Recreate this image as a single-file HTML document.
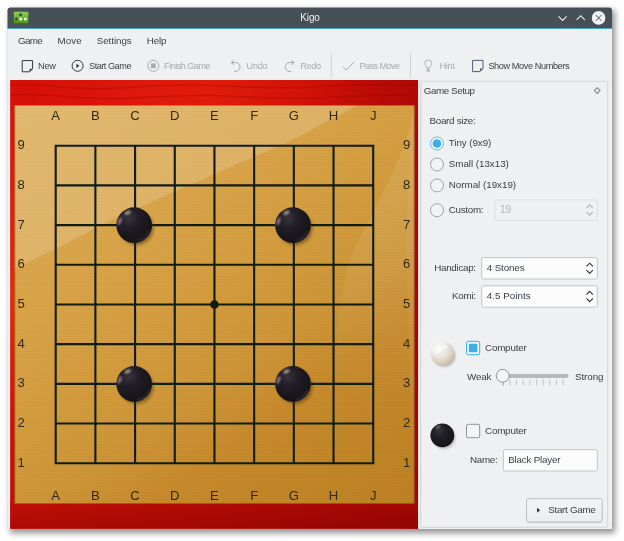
<!DOCTYPE html>
<html lang="en"><head><meta charset="utf-8"><title>Kigo</title>
<style>
html,body{margin:0;padding:0;}
body{width:624px;height:541px;background:#fff;position:relative;overflow:hidden;font-family:"Liberation Sans",sans-serif;}
#win{position:absolute;left:7.5px;top:7.4px;width:604.5px;height:521.3px;background:#eff0f1;border-radius:3px 3px 0 0;box-shadow:2.5px 3.5px 6px rgba(0,0,0,.44);}
#gfx{position:absolute;left:0;top:0;}
text{font-family:"Liberation Sans",sans-serif;}
#txt{will-change:transform;}

</style></head>
<body>
<div id="win"></div>
<svg id="gfx" width="624" height="541" viewBox="0 0 624 541">
<defs>
<linearGradient id="redtop" x1="0" y1="0" x2="1" y2="0">
<stop offset="0" stop-color="#d40e08"/><stop offset="0.14" stop-color="#d9120a"/><stop offset="0.32" stop-color="#de180a"/><stop offset="0.5" stop-color="#e01c0a"/><stop offset="0.72" stop-color="#d21208"/><stop offset="0.88" stop-color="#bc0b06"/><stop offset="1" stop-color="#b00905"/>
</linearGradient>
<linearGradient id="redleft" x1="0" y1="0" x2="0" y2="1">
<stop offset="0" stop-color="#d81008"/><stop offset="0.16" stop-color="#e0120a"/><stop offset="0.49" stop-color="#e62a04"/><stop offset="0.76" stop-color="#d80a08"/><stop offset="0.94" stop-color="#c20d06"/><stop offset="1" stop-color="#b80c05"/>
</linearGradient>
<linearGradient id="redright" x1="0" y1="0" x2="0" y2="1">
<stop offset="0" stop-color="#b00905"/><stop offset="0.5" stop-color="#a80404"/><stop offset="1" stop-color="#9c0602"/>
</linearGradient>
<linearGradient id="redbot" x1="0" y1="0" x2="1" y2="0">
<stop offset="0" stop-color="#c20e06"/><stop offset="0.5" stop-color="#b30a05"/><stop offset="1" stop-color="#a20703"/>
</linearGradient>
<linearGradient id="woodg" gradientUnits="userSpaceOnUse" x1="14.5" y1="105" x2="330.5" y2="560">
<stop offset="0" stop-color="#dcaa52"/><stop offset="0.33" stop-color="#d8a247"/><stop offset="0.5" stop-color="#d19a3b"/><stop offset="0.62" stop-color="#cc9436"/><stop offset="0.73" stop-color="#c6892a"/><stop offset="0.85" stop-color="#c08525"/><stop offset="1" stop-color="#bb8020"/>
</linearGradient>
<linearGradient id="swg" gradientUnits="userSpaceOnUse" x1="0" y1="105" x2="0" y2="400">
<stop offset="0" stop-color="#fff" stop-opacity="0.11"/><stop offset="0.45" stop-color="#fff" stop-opacity="0.075"/><stop offset="1" stop-color="#fff" stop-opacity="0"/>
</linearGradient>
<linearGradient id="swg2" gradientUnits="userSpaceOnUse" x1="0" y1="105" x2="0" y2="475">
<stop offset="0" stop-color="#fff" stop-opacity="0.05"/><stop offset="1" stop-color="#fff" stop-opacity="0.035"/>
</linearGradient>
<linearGradient id="icg" x1="0" y1="0" x2="0" y2="1"><stop offset="0" stop-color="#93cc5e"/><stop offset="0.5" stop-color="#6cb330"/><stop offset="1" stop-color="#4c9613"/></linearGradient>
<linearGradient id="btng" x1="0" y1="0" x2="0" y2="1"><stop offset="0" stop-color="#f3f4f4"/><stop offset="1" stop-color="#ecedee"/></linearGradient>
<linearGradient id="botv" x1="0" y1="0" x2="0" y2="1"><stop offset="0" stop-color="#500" stop-opacity="0"/><stop offset="1" stop-color="#500" stop-opacity="0.22"/></linearGradient>
<radialGradient id="bst" cx="0.36" cy="0.3" r="0.75">
<stop offset="0" stop-color="#38343d"/><stop offset="0.35" stop-color="#211e25"/><stop offset="1" stop-color="#131116"/>
</radialGradient>
<radialGradient id="wst" cx="0.38" cy="0.32" r="0.75">
<stop offset="0" stop-color="#ffffff"/><stop offset="0.4" stop-color="#f1efeb"/><stop offset="0.75" stop-color="#dfd3c0"/><stop offset="1" stop-color="#cbb595"/>
</radialGradient>
<pattern id="grain" width="8" height="3" patternUnits="userSpaceOnUse"><rect width="8" height="1" y="0" fill="#000" fill-opacity="0.012"/><rect width="8" height="1" y="1.5" fill="#fff" fill-opacity="0.015"/></pattern>
<filter id="blur1" x="-30%" y="-30%" width="160%" height="160%"><feGaussianBlur stdDeviation="1.6"/></filter>
<filter id="blur13" x="-30%" y="-30%" width="160%" height="160%"><feGaussianBlur stdDeviation="1.3"/></filter>
<filter id="blur05" x="-30%" y="-30%" width="160%" height="160%"><feGaussianBlur stdDeviation="0.9"/></filter>
</defs>
<path d="M7.500 28.3V10.400a3 3 0 0 1 3-3h598.500a3 3 0 0 1 3 3v17.900z" fill="#475057"/>
<rect x="7.500" y="28" width="604.500" height="0.900" fill="#3da4da"/>
<rect x="13.800" y="11.800" width="14.600" height="11.400" rx="1" fill="url(#icg)"/>
<circle cx="20.6" cy="14.7" r="1.5" fill="#3c4a3a"/><circle cx="16.4" cy="18.9" r="1.5" fill="#3c4a3a"/><circle cx="20.7" cy="18.9" r="1.5" fill="#f4f8f0"/><circle cx="25.4" cy="18.9" r="1.5" fill="#f4f8f0"/>
<path d="M558.500 16.300l4.100 4.100 4.100-4.100" fill="none" stroke="#eff0f1" stroke-width="1.100"/>
<path d="M576.600 19.800l4.100-4.100 4.100 4.100" fill="none" stroke="#eff0f1" stroke-width="1.100"/>
<circle cx="598.600" cy="17.900" r="6.800" fill="#f2f3f4"/>
<path d="M595.700 15l5.800 5.800M601.500 15l-5.800 5.800" fill="none" stroke="#475057" stroke-width="1"/>
<rect x="330.8" y="53" width="1" height="24.5" fill="#cfd1d3"/>
<rect x="410" y="53" width="1" height="24.5" fill="#cfd1d3"/>
<path d="M22.2 60.6h10.4v8.2l-3 3h-7.4z" fill="none" stroke="#31363b" stroke-width="1"/><path d="M32.6 68.8h-3v3z" fill="#31363b"/>
<circle cx="77.6" cy="65.8" r="5.5" fill="none" stroke="#31363b" stroke-width="1"/><path d="M76.400 63.700v4.200l3.100-2.100z" fill="#31363b"/>
<circle cx="153.3" cy="65.8" r="5.5" fill="none" stroke="#a8aaac" stroke-width="1"/><rect x="150.9" y="63.4" width="4.8" height="4.8" fill="#a8aaac"/>
<path d="M233.800 60.200L231.200 62.500l2.600 2.300M231.400 62.500H235.500A4.500 4.500 0 0 1 235.500 71.500h-1.500" fill="none" stroke="#a8aaac" stroke-width="1"/>
<path d="M291.500 60.200L294.100 62.500l-2.600 2.300M293.900 62.500H289.800A4.500 4.500 0 0 0 289.800 71.500h1.500" fill="none" stroke="#a8aaac" stroke-width="1"/>
<path d="M342.8 66.8l3.4 3.4 8.2-8.6" fill="none" stroke="#a8aaac" stroke-width="1"/>
<path d="M426.800 68.200C426.800 66 424.800 65.200 424.800 63.300A3.500 3.300 0 0 1 431.800 63.300C431.800 65.200 429.700 66 429.700 68.200z" fill="none" stroke="#a8aaac" stroke-width="0.9"/><rect x="426.500" y="69.500" width="3.500" height="1.900" rx="0.600" fill="#a8aaac"/>
<path d="M472.6 60.4h10.4v8.2l-3 3h-7.4z" fill="none" stroke="#4f5c74" stroke-width="1"/><path d="M483.0 68.6h-3v3z" fill="#4f5c74"/>
<rect x="10.4" y="80" width="407.6" height="448.7" fill="url(#redtop)"/>
<rect x="10.4" y="80" width="6" height="448.7" fill="url(#redleft)"/>
<rect x="412" y="80" width="6" height="448.7" fill="url(#redright)"/>
<rect x="10.4" y="500" width="407.6" height="28.700" fill="url(#redbot)"/>
<rect x="10.4" y="503" width="407.6" height="25.700" fill="url(#botv)"/>
<g fill="none" stroke="#9a0503" stroke-opacity="0.33" stroke-width="1.5"><path d="M10.4 85.5c30-3 50 3.5 85 3.2s70-5 110-3.4 70 4 110 1.6 70-3.500 103-1.500"/><path d="M10.400 95.500c30-3.500 55 2.500 90 3s70-4 110-3 75 4.500 115 2 60-3 93-2"/></g>
<rect x="14.5" y="105" width="400" height="398.8" fill="url(#woodg)"/>
<rect x="14.5" y="105" width="400" height="398.8" fill="url(#grain)"/>
<path d="M14.5 105H358L328 121 290 141 214.700 174 150 202.500 114 218.800 54.700 249.300 14.500 268.500z" fill="#fff" fill-opacity="0.17"/>
<path d="M414.500 105C412 118 410 128 407 137 403 150 398 162 392 174 386 186 380 199 374 211 368 223 361 236 355 248 350 258 347 269 345 280 342 295 339 308 338 320 336 345 336 380 336 400H414.500z" fill="url(#swg)"/>
<path d="M414.500 105C411 150 406 200 406.500 250 407 330 411 420 414.500 475z" fill="url(#swg2)"/>
<rect x="14.9" y="105.400" width="399.200" height="398" fill="none" stroke="#6b3a08" stroke-opacity="0.55" stroke-width="0.8"/>
<path d="M55.70 144.70V464.22M54.70 145.70H374.22M95.39 144.70V464.22M54.70 185.39H374.22M135.08 144.70V464.22M54.70 225.08H374.22M174.77 144.70V464.22M54.70 264.77H374.22M214.46 144.70V464.22M54.70 304.46H374.22M254.15 144.70V464.22M54.70 344.15H374.22M293.84 144.70V464.22M54.70 383.84H374.22M333.53 144.70V464.22M54.70 423.53H374.22M373.22 144.70V464.22M54.70 463.22H374.22" fill="none" stroke="#0f1c14" stroke-width="2.1"/>
<circle cx="214.46" cy="304.46" r="4.3" fill="#0f1c14"/>
<ellipse cx="136.68" cy="228.18" rx="17" ry="17" fill="#3a2000" fill-opacity="0.45" filter="url(#blur1)"/>
<circle cx="134.18" cy="225.18" r="17.850" fill="url(#bst)"/>
<ellipse cx="127.68" cy="212.68" rx="3.200" ry="1.600" fill="#cfd6c0" fill-opacity="0.75" filter="url(#blur05)" transform="rotate(-25 127.68 212.68)"/>
<path d="M149.38 230.68A16.200 16.200 0 0 1 137.18 241.08" fill="none" stroke="#6a6670" stroke-opacity="0.5" stroke-width="1.200" filter="url(#blur05)"/>
<ellipse cx="119.68" cy="221.18" rx="1.500" ry="4" fill="#c9a5c4" fill-opacity="0.7" filter="url(#blur05)" transform="rotate(20 119.68 221.18)"/>
<ellipse cx="295.44" cy="228.18" rx="17" ry="17" fill="#3a2000" fill-opacity="0.45" filter="url(#blur1)"/>
<circle cx="292.94" cy="225.18" r="17.850" fill="url(#bst)"/>
<ellipse cx="286.44" cy="212.68" rx="3.200" ry="1.600" fill="#cfd6c0" fill-opacity="0.75" filter="url(#blur05)" transform="rotate(-25 286.44 212.68)"/>
<path d="M308.14 230.68A16.200 16.200 0 0 1 295.94 241.08" fill="none" stroke="#6a6670" stroke-opacity="0.5" stroke-width="1.200" filter="url(#blur05)"/>
<ellipse cx="278.44" cy="221.18" rx="1.500" ry="4" fill="#c9a5c4" fill-opacity="0.7" filter="url(#blur05)" transform="rotate(20 278.44 221.18)"/>
<ellipse cx="136.68" cy="386.94" rx="17" ry="17" fill="#3a2000" fill-opacity="0.45" filter="url(#blur1)"/>
<circle cx="134.18" cy="383.94" r="17.850" fill="url(#bst)"/>
<ellipse cx="127.68" cy="371.44" rx="3.200" ry="1.600" fill="#cfd6c0" fill-opacity="0.75" filter="url(#blur05)" transform="rotate(-25 127.68 371.44)"/>
<path d="M149.38 389.44A16.200 16.200 0 0 1 137.18 399.84" fill="none" stroke="#6a6670" stroke-opacity="0.5" stroke-width="1.200" filter="url(#blur05)"/>
<ellipse cx="119.68" cy="379.94" rx="1.500" ry="4" fill="#c9a5c4" fill-opacity="0.7" filter="url(#blur05)" transform="rotate(20 119.68 379.94)"/>
<ellipse cx="295.44" cy="386.94" rx="17" ry="17" fill="#3a2000" fill-opacity="0.45" filter="url(#blur1)"/>
<circle cx="292.94" cy="383.94" r="17.850" fill="url(#bst)"/>
<ellipse cx="286.44" cy="371.44" rx="3.200" ry="1.600" fill="#cfd6c0" fill-opacity="0.75" filter="url(#blur05)" transform="rotate(-25 286.44 371.44)"/>
<path d="M308.14 389.44A16.200 16.200 0 0 1 295.94 399.84" fill="none" stroke="#6a6670" stroke-opacity="0.5" stroke-width="1.200" filter="url(#blur05)"/>
<ellipse cx="278.44" cy="379.94" rx="1.500" ry="4" fill="#c9a5c4" fill-opacity="0.7" filter="url(#blur05)" transform="rotate(20 278.44 379.94)"/>
<rect x="418" y="80" width="2.6" height="448.7" fill="#e3e5e7"/>
<rect x="420.9" y="81.3" width="186.800" height="446" rx="1.500" fill="#eff0f1" stroke="#d2d4d6" stroke-width="1"/>
<path d="M597.200 87.700l2.900 2.900-2.900 2.900-2.900-2.900z" fill="none" stroke="#85888b" stroke-width="1.1"/>
<circle cx="437" cy="143.5" r="6.500" fill="#f4f9fc" stroke="#4fb5ea" stroke-width="0.900"/><circle cx="437" cy="143.5" r="4.350" fill="#3daee9"/>
<circle cx="437" cy="164.5" r="6.500" fill="#f1f2f3" stroke="#979a9d" stroke-width="0.900"/>
<circle cx="437" cy="185.4" r="6.500" fill="#f1f2f3" stroke="#979a9d" stroke-width="0.900"/>
<circle cx="437" cy="210.2" r="6.500" fill="#f1f2f3" stroke="#979a9d" stroke-width="0.900"/>
<rect x="494.800" y="199.900" width="102.500" height="20.500" rx="1.500" fill="#eff0f1" stroke="#dcdee0" stroke-width="1"/>
<path d="M586.50 208.10l3.200-3.200 3.200 3.200M586.50 211.90l3.200 3.200 3.200-3.200" fill="none" stroke="#b4b6b8" stroke-width="1.150"/>
<rect x="481.700" y="257.600" width="115.600" height="21.400" rx="1.500" fill="#fcfcfc" stroke="#c2c4c6" stroke-width="1"/>
<path d="M586.50 266.40l3.200-3.200 3.200 3.200M586.50 270.20l3.200 3.200 3.200-3.200" fill="none" stroke="#31363b" stroke-width="1.150"/>
<rect x="481.700" y="285.800" width="115.600" height="21.400" rx="1.500" fill="#fcfcfc" stroke="#c2c4c6" stroke-width="1"/>
<path d="M586.50 294.60l3.200-3.200 3.200 3.200M586.50 298.40l3.200 3.200 3.200-3.200" fill="none" stroke="#31363b" stroke-width="1.150"/>
<ellipse cx="444" cy="355.500" rx="11.300" ry="11.300" fill="#000" fill-opacity="0.24" filter="url(#blur13)"/>
<circle cx="442.300" cy="353.300" r="11.900" fill="url(#wst)"/>
<clipPath id="wclip"><circle cx="442.300" cy="353.300" r="11.900"/></clipPath>
<g clip-path="url(#wclip)" fill="none" stroke="#9a9aa6" stroke-opacity="0.22" stroke-width="1.300" filter="url(#blur05)"><path d="M431 358c6-2 14-7 20-13M432 362c7-3 15-8 21-14M436 366c6-3 12-7 17-12"/></g>
<ellipse cx="445.600" cy="347" rx="1.300" ry="0.900" fill="#fff" fill-opacity="0.9"/>
<rect x="466.500" y="341.300" width="13.200" height="13.400" rx="1.800" fill="#f2f8fc" stroke="#3daee9" stroke-width="1"/><rect x="468.900" y="343.700" width="8.400" height="8.600" rx="0.500" fill="#3daee9"/>
<rect x="503" y="373.900" width="65.400" height="4" rx="2" fill="#b6b9bb"/>
<rect x="502.80" y="379.400" width="0.850" height="6.200" fill="#3daee9"/>
<rect x="509.45" y="379.400" width="0.850" height="6.200" fill="#bcbec0"/>
<rect x="516.11" y="379.400" width="0.850" height="6.200" fill="#bcbec0"/>
<rect x="522.76" y="379.400" width="0.850" height="6.200" fill="#bcbec0"/>
<rect x="529.42" y="379.400" width="0.850" height="6.200" fill="#bcbec0"/>
<rect x="536.08" y="379.400" width="0.850" height="6.200" fill="#bcbec0"/>
<rect x="542.73" y="379.400" width="0.850" height="6.200" fill="#bcbec0"/>
<rect x="549.38" y="379.400" width="0.850" height="6.200" fill="#bcbec0"/>
<rect x="556.04" y="379.400" width="0.850" height="6.200" fill="#bcbec0"/>
<rect x="562.70" y="379.400" width="0.850" height="6.200" fill="#bcbec0"/>
<circle cx="502.700" cy="375.800" r="6.400" fill="#f4f5f5" stroke="#8e9194" stroke-width="1"/>
<ellipse cx="444" cy="437.500" rx="11.300" ry="11.300" fill="#000" fill-opacity="0.24" filter="url(#blur13)"/>
<circle cx="442.300" cy="435.300" r="11.900" fill="url(#bst)"/>
<ellipse cx="438" cy="427" rx="2.200" ry="1.100" fill="#cfd6c0" fill-opacity="0.7" filter="url(#blur05)" transform="rotate(-25 438 427)"/>
<rect x="466.500" y="424.300" width="13.200" height="13.400" rx="1.800" fill="#f3f4f4" stroke="#8e9194" stroke-width="1"/>
<rect x="503.400" y="449.600" width="93.900" height="21.400" rx="1.500" fill="#fcfcfc" stroke="#c2c4c6" stroke-width="1"/>
<rect x="526.900" y="499.600" width="75.200" height="23.300" rx="2.200" fill="#d3d5d7"/>
<rect x="526.500" y="498.700" width="75.700" height="23.300" rx="2" fill="url(#btng)" stroke="#babcbe" stroke-width="1"/>
<path d="M537 507.700v5l3.200-2.500z" fill="#31363b"/>

<g id="txt" font-family="Liberation Sans, sans-serif" style="white-space:pre">
<text x="300.30" y="20.80" font-size="10" fill="#eff0f1" textLength="19.60" lengthAdjust="spacing">Kigo</text>
<text x="18.00" y="43.50" font-size="9.8" fill="#393e43" textLength="24.70" lengthAdjust="spacing">Game</text>
<text x="57.50" y="43.50" font-size="9.8" fill="#393e43" textLength="24.20" lengthAdjust="spacing">Move</text>
<text x="96.75" y="43.50" font-size="9.8" fill="#393e43" textLength="34.95" lengthAdjust="spacing">Settings</text>
<text x="146.75" y="43.50" font-size="9.8" fill="#393e43" textLength="19.70" lengthAdjust="spacing">Help</text>
<text x="38.00" y="69.00" font-size="9.2" fill="#393e43" textLength="17.90" lengthAdjust="spacing">New</text>
<text x="89.00" y="69.00" font-size="9.2" fill="#393e43" textLength="42.50" lengthAdjust="spacing">Start Game</text>
<text x="164.10" y="69.00" font-size="9.2" fill="#a8aaac" textLength="46.50" lengthAdjust="spacing">Finish Game</text>
<text x="246.60" y="69.00" font-size="9.2" fill="#a8aaac" textLength="21.00" lengthAdjust="spacing">Undo</text>
<text x="300.35" y="69.00" font-size="9.2" fill="#a8aaac" textLength="20.75" lengthAdjust="spacing">Redo</text>
<text x="359.60" y="69.00" font-size="9.2" fill="#a8aaac" textLength="40.50" lengthAdjust="spacing">Pass Move</text>
<text x="439.50" y="69.00" font-size="9.2" fill="#a8aaac" textLength="15.50" lengthAdjust="spacing">Hint</text>
<text x="488.40" y="69.00" font-size="9.2" fill="#393e43" textLength="81.10" lengthAdjust="spacing">Show Move Numbers</text>
<text x="423.80" y="93.70" font-size="9.8" fill="#393e43" textLength="51.20" lengthAdjust="spacing">Game Setup</text>
<text x="429.50" y="123.90" font-size="9.8" fill="#393e43" textLength="46.20" lengthAdjust="spacing">Board size:</text>
<text x="448.80" y="146.10" font-size="9.8" fill="#393e43" textLength="42.50" lengthAdjust="spacing">Tiny (9x9)</text>
<text x="448.80" y="167.10" font-size="9.8" fill="#393e43" textLength="60.00" lengthAdjust="spacing">Small (13x13)</text>
<text x="448.80" y="188.00" font-size="9.8" fill="#393e43" textLength="67.30" lengthAdjust="spacing">Normal (19x19)</text>
<text x="448.80" y="212.80" font-size="9.8" fill="#393e43" textLength="34.80" lengthAdjust="spacing">Custom:</text>
<text x="499.90" y="212.80" font-size="10" fill="#b4b6b8" textLength="11.10" lengthAdjust="spacing">19</text>
<text x="434.20" y="271.10" font-size="9.8" fill="#393e43" textLength="41.90" lengthAdjust="spacing">Handicap:</text>
<text x="486.70" y="271.10" font-size="9.8" fill="#393e43" textLength="37.90" lengthAdjust="spacing">4 Stones</text>
<text x="451.90" y="299.30" font-size="9.8" fill="#393e43" textLength="24.20" lengthAdjust="spacing">Komi:</text>
<text x="486.70" y="299.30" font-size="9.8" fill="#393e43" textLength="43.90" lengthAdjust="spacing">4.5 Points</text>
<text x="485.00" y="350.90" font-size="9.8" fill="#393e43" textLength="41.70" lengthAdjust="spacing">Computer</text>
<text x="467.00" y="379.50" font-size="9.8" fill="#393e43" textLength="24.30" lengthAdjust="spacing">Weak</text>
<text x="574.90" y="379.50" font-size="9.8" fill="#393e43" textLength="28.60" lengthAdjust="spacing">Strong</text>
<text x="485.00" y="433.90" font-size="9.8" fill="#393e43" textLength="41.70" lengthAdjust="spacing">Computer</text>
<text x="470.00" y="463.10" font-size="9.8" fill="#393e43" textLength="27.70" lengthAdjust="spacing">Name:</text>
<text x="508.30" y="463.10" font-size="9.8" fill="#393e43" textLength="52.10" lengthAdjust="spacing">Black Player</text>
<text x="548.30" y="513.20" font-size="9.8" fill="#393e43" textLength="47.40" lengthAdjust="spacing">Start Game</text>
<text x="55.70" y="120.00" font-size="13.1" fill="#2e2a12" text-anchor="middle">A</text>
<text x="55.70" y="500.00" font-size="13.1" fill="#2e2a12" text-anchor="middle">A</text>
<text x="95.39" y="120.00" font-size="13.1" fill="#2e2a12" text-anchor="middle">B</text>
<text x="95.39" y="500.00" font-size="13.1" fill="#2e2a12" text-anchor="middle">B</text>
<text x="135.08" y="120.00" font-size="13.1" fill="#2e2a12" text-anchor="middle">C</text>
<text x="135.08" y="500.00" font-size="13.1" fill="#2e2a12" text-anchor="middle">C</text>
<text x="174.77" y="120.00" font-size="13.1" fill="#2e2a12" text-anchor="middle">D</text>
<text x="174.77" y="500.00" font-size="13.1" fill="#2e2a12" text-anchor="middle">D</text>
<text x="214.46" y="120.00" font-size="13.1" fill="#2e2a12" text-anchor="middle">E</text>
<text x="214.46" y="500.00" font-size="13.1" fill="#2e2a12" text-anchor="middle">E</text>
<text x="254.15" y="120.00" font-size="13.1" fill="#2e2a12" text-anchor="middle">F</text>
<text x="254.15" y="500.00" font-size="13.1" fill="#2e2a12" text-anchor="middle">F</text>
<text x="293.84" y="120.00" font-size="13.1" fill="#2e2a12" text-anchor="middle">G</text>
<text x="293.84" y="500.00" font-size="13.1" fill="#2e2a12" text-anchor="middle">G</text>
<text x="333.53" y="120.00" font-size="13.1" fill="#2e2a12" text-anchor="middle">H</text>
<text x="333.53" y="500.00" font-size="13.1" fill="#2e2a12" text-anchor="middle">H</text>
<text x="373.22" y="120.00" font-size="13.1" fill="#2e2a12" text-anchor="middle">J</text>
<text x="373.22" y="500.00" font-size="13.1" fill="#2e2a12" text-anchor="middle">J</text>
<text x="21.20" y="149.20" font-size="13.1" fill="#2e2a12" text-anchor="middle">9</text>
<text x="406.60" y="149.20" font-size="13.1" fill="#2e2a12" text-anchor="middle">9</text>
<text x="21.20" y="188.89" font-size="13.1" fill="#2e2a12" text-anchor="middle">8</text>
<text x="406.60" y="188.89" font-size="13.1" fill="#2e2a12" text-anchor="middle">8</text>
<text x="21.20" y="228.58" font-size="13.1" fill="#2e2a12" text-anchor="middle">7</text>
<text x="406.60" y="228.58" font-size="13.1" fill="#2e2a12" text-anchor="middle">7</text>
<text x="21.20" y="268.27" font-size="13.1" fill="#2e2a12" text-anchor="middle">6</text>
<text x="406.60" y="268.27" font-size="13.1" fill="#2e2a12" text-anchor="middle">6</text>
<text x="21.20" y="307.96" font-size="13.1" fill="#2e2a12" text-anchor="middle">5</text>
<text x="406.60" y="307.96" font-size="13.1" fill="#2e2a12" text-anchor="middle">5</text>
<text x="21.20" y="347.65" font-size="13.1" fill="#2e2a12" text-anchor="middle">4</text>
<text x="406.60" y="347.65" font-size="13.1" fill="#2e2a12" text-anchor="middle">4</text>
<text x="21.20" y="387.34" font-size="13.1" fill="#2e2a12" text-anchor="middle">3</text>
<text x="406.60" y="387.34" font-size="13.1" fill="#2e2a12" text-anchor="middle">3</text>
<text x="21.20" y="427.03" font-size="13.1" fill="#2e2a12" text-anchor="middle">2</text>
<text x="406.60" y="427.03" font-size="13.1" fill="#2e2a12" text-anchor="middle">2</text>
<text x="21.20" y="466.72" font-size="13.1" fill="#2e2a12" text-anchor="middle">1</text>
<text x="406.60" y="466.72" font-size="13.1" fill="#2e2a12" text-anchor="middle">1</text>
</g>
</svg>
</body></html>
